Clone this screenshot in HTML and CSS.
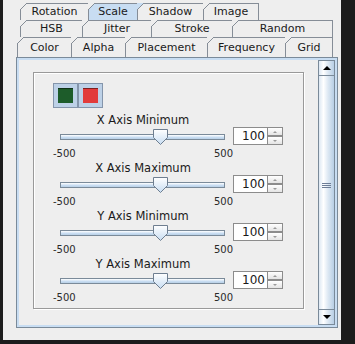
FILE: index.html
```html
<html lang="en">
    <head>
        <meta charset="UTF-8">
        <title>Scale</title>
        <link rel="stylesheet" href="styles.css">
    </head>
    <body>
        <div class="frame">
            <!--tab headers, three wrapped runs-->
            <div class="tabs">
                <div class="tab-row row-top">
                    <div class="tab">Rotation</div>
                    <div class="tab selected">Scale</div>
                    <div class="tab">Shadow</div>
                    <div class="tab last">Image</div>
                </div>
                <div class="tab-row row-middle">
                    <div class="tab">HSB</div>
                    <div class="tab">Jitter</div>
                    <div class="tab">Stroke</div>
                    <div class="tab last">Random</div>
                </div>
                <div class="tab-row row-bottom">
                    <div class="tab">Color</div>
                    <div class="tab">Alpha</div>
                    <div class="tab">Placement</div>
                    <div class="tab">Frequency</div>
                    <div class="tab last">Grid</div>
                </div>
            </div>

            <!--content of the Scale tab-->
            <div class="tab-content">
                <div class="scroll-pane">
                    <div class="viewport">
                        <div class="settings-panel">
                            <div class="color-buttons">
                                <div class="color-button"><span class="swatch swatch-green"></span></div>
                                <div class="color-button"><span class="swatch swatch-red"></span></div>
                            </div>

                            <div class="axis-group">
                                <div class="axis-label">X Axis Minimum</div>
                                <div class="axis-control">
                                    <div class="slider">
                                        <div class="slider-track">
                                            <svg class="slider-thumb" style="left: 60%" width="15" height="16" viewBox="0 0 15 16">
                                                <defs><linearGradient id="thumb-1" x1="0" y1="0" x2="0" y2="1"><stop offset="0" stop-color="#ffffff"/><stop offset="1" stop-color="#c8ddf2"/></linearGradient></defs>
                                                <path d="M0.5 0.5H14.5V8.5L7.5 15.5L0.5 8.5Z" fill="url(#thumb-1)" stroke="#6e7e90"/>
                                            </svg>
                                        </div>
                                    </div>
                                    <div class="spinner">
                                        <div class="spinner-field">100</div>
                                        <div class="spinner-buttons">
                                            <div class="spin-btn"><span class="mini-up"></span></div>
                                            <div class="spin-btn"><span class="mini-down"></span></div>
                                        </div>
                                    </div>
                                </div>
                                <div class="slider-ticks"><span>-500</span><span>500</span></div>
                            </div>

                            <div class="axis-group">
                                <div class="axis-label">X Axis Maximum</div>
                                <div class="axis-control">
                                    <div class="slider">
                                        <div class="slider-track">
                                            <svg class="slider-thumb" style="left: 60%" width="15" height="16" viewBox="0 0 15 16">
                                                <defs><linearGradient id="thumb-2" x1="0" y1="0" x2="0" y2="1"><stop offset="0" stop-color="#ffffff"/><stop offset="1" stop-color="#c8ddf2"/></linearGradient></defs>
                                                <path d="M0.5 0.5H14.5V8.5L7.5 15.5L0.5 8.5Z" fill="url(#thumb-2)" stroke="#6e7e90"/>
                                            </svg>
                                        </div>
                                    </div>
                                    <div class="spinner">
                                        <div class="spinner-field">100</div>
                                        <div class="spinner-buttons">
                                            <div class="spin-btn"><span class="mini-up"></span></div>
                                            <div class="spin-btn"><span class="mini-down"></span></div>
                                        </div>
                                    </div>
                                </div>
                                <div class="slider-ticks"><span>-500</span><span>500</span></div>
                            </div>

                            <div class="axis-group">
                                <div class="axis-label">Y Axis Minimum</div>
                                <div class="axis-control">
                                    <div class="slider">
                                        <div class="slider-track">
                                            <svg class="slider-thumb" style="left: 60%" width="15" height="16" viewBox="0 0 15 16">
                                                <defs><linearGradient id="thumb-3" x1="0" y1="0" x2="0" y2="1"><stop offset="0" stop-color="#ffffff"/><stop offset="1" stop-color="#c8ddf2"/></linearGradient></defs>
                                                <path d="M0.5 0.5H14.5V8.5L7.5 15.5L0.5 8.5Z" fill="url(#thumb-3)" stroke="#6e7e90"/>
                                            </svg>
                                        </div>
                                    </div>
                                    <div class="spinner">
                                        <div class="spinner-field">100</div>
                                        <div class="spinner-buttons">
                                            <div class="spin-btn"><span class="mini-up"></span></div>
                                            <div class="spin-btn"><span class="mini-down"></span></div>
                                        </div>
                                    </div>
                                </div>
                                <div class="slider-ticks"><span>-500</span><span>500</span></div>
                            </div>

                            <div class="axis-group">
                                <div class="axis-label">Y Axis Maximum</div>
                                <div class="axis-control">
                                    <div class="slider">
                                        <div class="slider-track">
                                            <svg class="slider-thumb" style="left: 60%" width="15" height="16" viewBox="0 0 15 16">
                                                <defs><linearGradient id="thumb-4" x1="0" y1="0" x2="0" y2="1"><stop offset="0" stop-color="#ffffff"/><stop offset="1" stop-color="#c8ddf2"/></linearGradient></defs>
                                                <path d="M0.5 0.5H14.5V8.5L7.5 15.5L0.5 8.5Z" fill="url(#thumb-4)" stroke="#6e7e90"/>
                                            </svg>
                                        </div>
                                    </div>
                                    <div class="spinner">
                                        <div class="spinner-field">100</div>
                                        <div class="spinner-buttons">
                                            <div class="spin-btn"><span class="mini-up"></span></div>
                                            <div class="spin-btn"><span class="mini-down"></span></div>
                                        </div>
                                    </div>
                                </div>
                                <div class="slider-ticks"><span>-500</span><span>500</span></div>
                            </div>
                        </div>
                    </div>

                    <!--vertical scrollbar, thumb fills the track-->
                    <div class="scrollbar">
                        <div class="scroll-button"><span class="arrow-up"></span></div>
                        <div class="scroll-thumb"><span class="grip"></span></div>
                        <div class="scroll-button"><span class="arrow-down"></span></div>
                    </div>
                </div>
            </div>
        </div>
    </body>
</html>
```

FILE: styles.css
```css
body {
    margin: 0;
    padding: 0;
    background-color: #1c1c1c; /*dark desktop around the window*/
    font-family: 'DejaVu Sans', sans-serif;
    color: #1a1a1a;
    height: 344px;
    overflow: hidden;
}

.frame {
    width: 338px;
    height: 340px;
    margin-left: 3px;
    background-color: #eeeeee;
    padding: 3px 0 0 13px;
    box-sizing: border-box;
}

/* ---------- tabs ---------- */

.tabs {
    display: flex;
    flex-direction: column;
}

.tab-row {
    display: grid;
    font-size: 11px;
}

.row-top {
    grid-template-columns: 68px 49px 66px 56px;
    margin-left: 4px;
    height: 17px;
    line-height: 16px;
}

.row-middle {
    grid-template-columns: 62px 69px 81px 101px;
    margin-left: 4px;
    height: 17px;
    line-height: 16px;
}

.row-bottom {
    grid-template-columns: 54px 54px 82px 78px 48px;
    margin-left: 1px;
    height: 20px;
    line-height: 19px;
}

.tab {
    position: relative;
    background-color: #eeeeee;
    border-top: 1px solid #858d97;
    border-left: 1px solid #858d97;
    text-align: center;
    white-space: nowrap;
}

.tab.last {
    border-right: 1px solid #858d97;
}

/*metal style cut corner*/
.tab::before {
    content: "";
    position: absolute;
    top: -1px;
    left: -1px;
    width: 7px;
    height: 7px;
    background: linear-gradient(to bottom right, #eeeeee 0 calc(50% - 0.7px), #858d97 calc(50% - 0.7px) calc(50% + 0.7px), transparent calc(50% + 0.7px));
}

.tab.selected {
    background-color: #c8ddf2; /*selected tab blue*/
}

.tab.selected + .tab::before {
    background: linear-gradient(to bottom right, #c8ddf2 0 calc(50% - 0.7px), #858d97 calc(50% - 0.7px) calc(50% + 0.7px), transparent calc(50% + 0.7px));
}

/* ---------- content ---------- */

.tab-content {
    width: 322px;
    height: 271px;
    box-sizing: border-box;
    border: 1px solid #7a8a99;
    padding: 2px;
    background-color: #c8ddf2; /*blue band inside the border*/
}

.scroll-pane {
    display: flex;
    height: 100%;
    background-color: #eeeeee;
}

.viewport {
    flex: 1;
    padding: 12px 14px;
}

.settings-panel {
    border: 1px solid #999999;
    box-shadow: inset 1px 1px 0 #ffffff, 1px 1px 0 #ffffff; /*etched look*/
    padding: 10px 0 7px 19px;
}

.color-buttons {
    display: flex;
}

.color-button {
    width: 25px;
    height: 25px;
    box-sizing: border-box;
    border: 1px solid #8495ab;
    background-color: #bdd1e7;
    display: flex;
    align-items: center;
    justify-content: center;
}

.swatch {
    width: 15px;
    height: 15px;
    box-sizing: border-box;
    border-top: 1px solid rgba(0, 0, 0, 0.45);
}

.swatch-green {
    background-color: #1d5c2a;
}

.swatch-red {
    background-color: #e23b3b;
}

.axis-group {
    margin-top: 5px;
    margin-bottom: -4px;
    height: 48px;
}

.axis-group + .axis-group {
    margin-top: 4px;
}

.axis-label {
    width: 180px;
    text-align: center;
    font-size: 11.5px;
    line-height: 14px;
    white-space: nowrap;
}

.axis-control {
    display: flex;
    height: 18px;
}

.slider {
    width: 180px;
    height: 18px;
}

.slider-track {
    position: relative;
    margin: 7px 0 0 7px;
    width: 165px;
    height: 6px;
    box-sizing: border-box;
    border: 1px solid #7a8a99;
    background: linear-gradient(#ffffff, #c8ddf2 60%, #b8cfe5);
}

.slider-thumb {
    position: absolute;
    top: -6px;
    margin-left: -6px;
}

.spinner {
    display: flex;
    width: 50px;
    height: 18px;
}

.spinner-field {
    width: 35px;
    box-sizing: border-box;
    border: 1px solid #8c8c8c;
    background-color: #ffffff;
    font-size: 12px;
    line-height: 15px;
    padding: 1px 2px 0 0;
    text-align: right;
}

.spinner-buttons {
    width: 15px;
    display: flex;
    flex-direction: column;
    border: 1px solid #8c8c8c;
    border-left: none;
    box-sizing: border-box;
}

.spin-btn {
    flex: 1;
    display: flex;
    align-items: center;
    justify-content: center;
    background: linear-gradient(#ffffff, #e4e4e4);
}

.spin-btn + .spin-btn {
    border-top: 2px solid #8c8c8c;
}

.mini-up,
.mini-down {
    width: 0;
    height: 0;
    border-left: 2px solid transparent;
    border-right: 2px solid transparent;
}

.mini-up {
    border-bottom: 2px solid #9a9a9a;
}

.mini-down {
    border-top: 2px solid #9a9a9a;
}

.slider-ticks {
    display: flex;
    justify-content: space-between;
    width: 180px;
    margin-top: 3px;
    font-size: 10px;
    line-height: 12px;
    color: #2a2a2a;
}

/* ---------- scrollbar ---------- */

.scrollbar {
    width: 17px;
    display: flex;
    flex-direction: column;
}

.scroll-button {
    height: 16px;
    box-sizing: border-box;
    border: 1px solid #7a8a99;
    background: linear-gradient(to right, #dde8f3, #ffffff 30%, #dde8f3 60%, #b8cfe5);
    display: flex;
    align-items: center;
    justify-content: center;
}

.arrow-up,
.arrow-down {
    width: 0;
    height: 0;
    border-left: 4px solid transparent;
    border-right: 4px solid transparent;
}

.arrow-up {
    border-bottom: 4px solid #000000;
}

.arrow-down {
    border-top: 4px solid #000000;
}

.scroll-thumb {
    flex: 1;
    border-left: 1px solid #7a8a99;
    border-right: 1px solid #7a8a99;
    background: linear-gradient(to right, #dde8f3, #ffffff 30%, #dde8f3 60%, #b8cfe5);
    display: flex;
    align-items: center;
    justify-content: center;
    padding-bottom: 14px; /*grip sits a bit above the middle*/
}

.grip {
    width: 9px;
    height: 5px;
    background: repeating-linear-gradient(#6d7d96 0 1px, transparent 1px 2px);
}
```
